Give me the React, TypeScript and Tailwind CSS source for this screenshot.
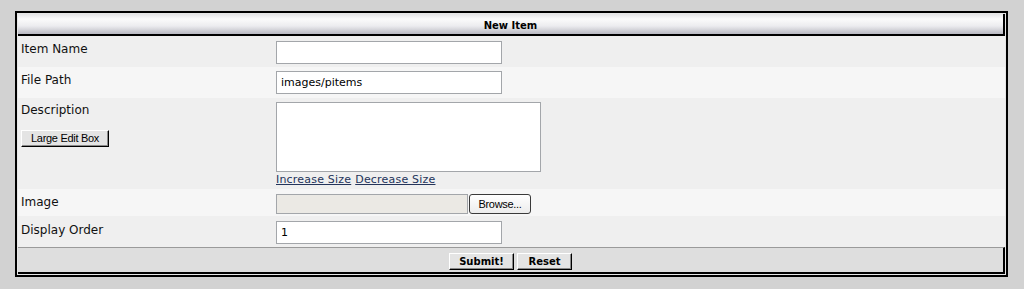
import React from "react";

const btnClassic =
  "border border-t-white border-l-white border-r-black border-b-black bg-[#e4e4e4] shadow-[inset_-1px_-1px_0_#8a8a8a] text-black flex items-center justify-center";

export default function App() {
  const label = "pl-[3px] text-[12px] leading-[16px] text-[#111]";
  const input =
    "block border border-[#a3a6aa] bg-white px-[4px] text-[11px] text-black outline-none";
  return (
    <div
      className="w-[1024px] h-[289px] bg-[#d2d2d2] pt-[11px] pl-[15px]"
      style={{ fontFamily: '"DejaVu Sans", Verdana, sans-serif' }}
    >
      <div className="w-[993px] border-2 border-black bg-[#e6e6e6] p-[1px]">
        {/* Header */}
        <div className="h-[22px] border-r-2 border-b-2 border-black bg-[linear-gradient(to_bottom,#e4e4e6_0%,#fbfbfb_25%,#ececef_60%,#b9b9c2_100%)] flex justify-center pt-[6px]">
          <span className="text-[10px] leading-[12px] font-bold text-black">New Item</span>
        </div>

        {/* Item Name */}
        <div className="flex h-[31px] bg-[#efefef]">
          <div className="w-[258px] pt-[5px]">
            <div className={label}>Item Name</div>
          </div>
          <div className="pt-[5px]">
            <input className={`${input} w-[226px] h-[23px]`} defaultValue="" />
          </div>
        </div>

        {/* File Path */}
        <div className="flex h-[31px] bg-[#f6f6f6]">
          <div className="w-[258px] pt-[5px]">
            <div className={label}>File Path</div>
          </div>
          <div className="pt-[4px]">
            <input className={`${input} w-[226px] h-[23px]`} defaultValue="images/pitems" />
          </div>
        </div>

        {/* Description */}
        <div className="flex h-[91px] bg-[#efefef]">
          <div className="w-[258px] pt-[4px] flex flex-col">
            <div className={label}>Description</div>
            <div className="pl-[3px] mt-[12px]">
              <button
                className={`${btnClassic} w-[88px] h-[17px] text-[11px] tracking-[-0.3px]`}
                style={{ fontFamily: '"Liberation Sans", Arial, sans-serif' }}
              >
                Large Edit Box
              </button>
            </div>
          </div>
          <div className="pt-[4px] flex flex-col">
            <textarea className="block border border-[#a3a6aa] bg-white w-[265px] h-[70px] resize-none outline-none" />
            <div className="mt-[1px] text-[11px] leading-[14px] text-[#24345a] flex gap-[4px] tracking-[0.2px]">
              <span className="underline">Increase Size</span>
              <span className="underline">Decrease Size</span>
            </div>
          </div>
        </div>

        {/* Image */}
        <div className="flex h-[27px] bg-[#f6f6f6]">
          <div className="w-[258px] pt-[5px]">
            <div className={label}>Image</div>
          </div>
          <div className="pt-[5px] flex gap-[1px]">
            <div className="w-[192px] h-[20px] border border-[#a3a6aa] bg-[#ebe9e4]" />
            <button
              className="w-[62px] h-[20px] rounded-[3px] border border-[#3a3a3a] bg-[linear-gradient(to_bottom,#ffffff,#ececec)] text-[11px] text-black flex items-center justify-center tracking-[-0.3px]"
              style={{ fontFamily: '"Liberation Sans", Arial, sans-serif' }}
            >
              Browse...
            </button>
          </div>
        </div>

        {/* Display Order */}
        <div className="flex h-[31px] bg-[#efefef]">
          <div className="w-[258px] pt-[6px]">
            <div className={label}>Display Order</div>
          </div>
          <div className="pt-[5px]">
            <input className={`${input} w-[226px] h-[23px]`} defaultValue="1" />
          </div>
        </div>

        {/* Footer */}
        <div className="h-[27px] border-t border-t-[#9a9a9a] border-r-2 border-r-black border-b-2 border-b-black bg-[#dedede] flex justify-center gap-[3px] pt-[5px]">
          <button className={`${btnClassic} w-[65px] h-[17px] text-[10px] font-bold`}>Submit!</button>
          <button className={`${btnClassic} w-[55px] h-[17px] text-[10px] font-bold`}>Reset</button>
        </div>
      </div>
    </div>
  );
}
